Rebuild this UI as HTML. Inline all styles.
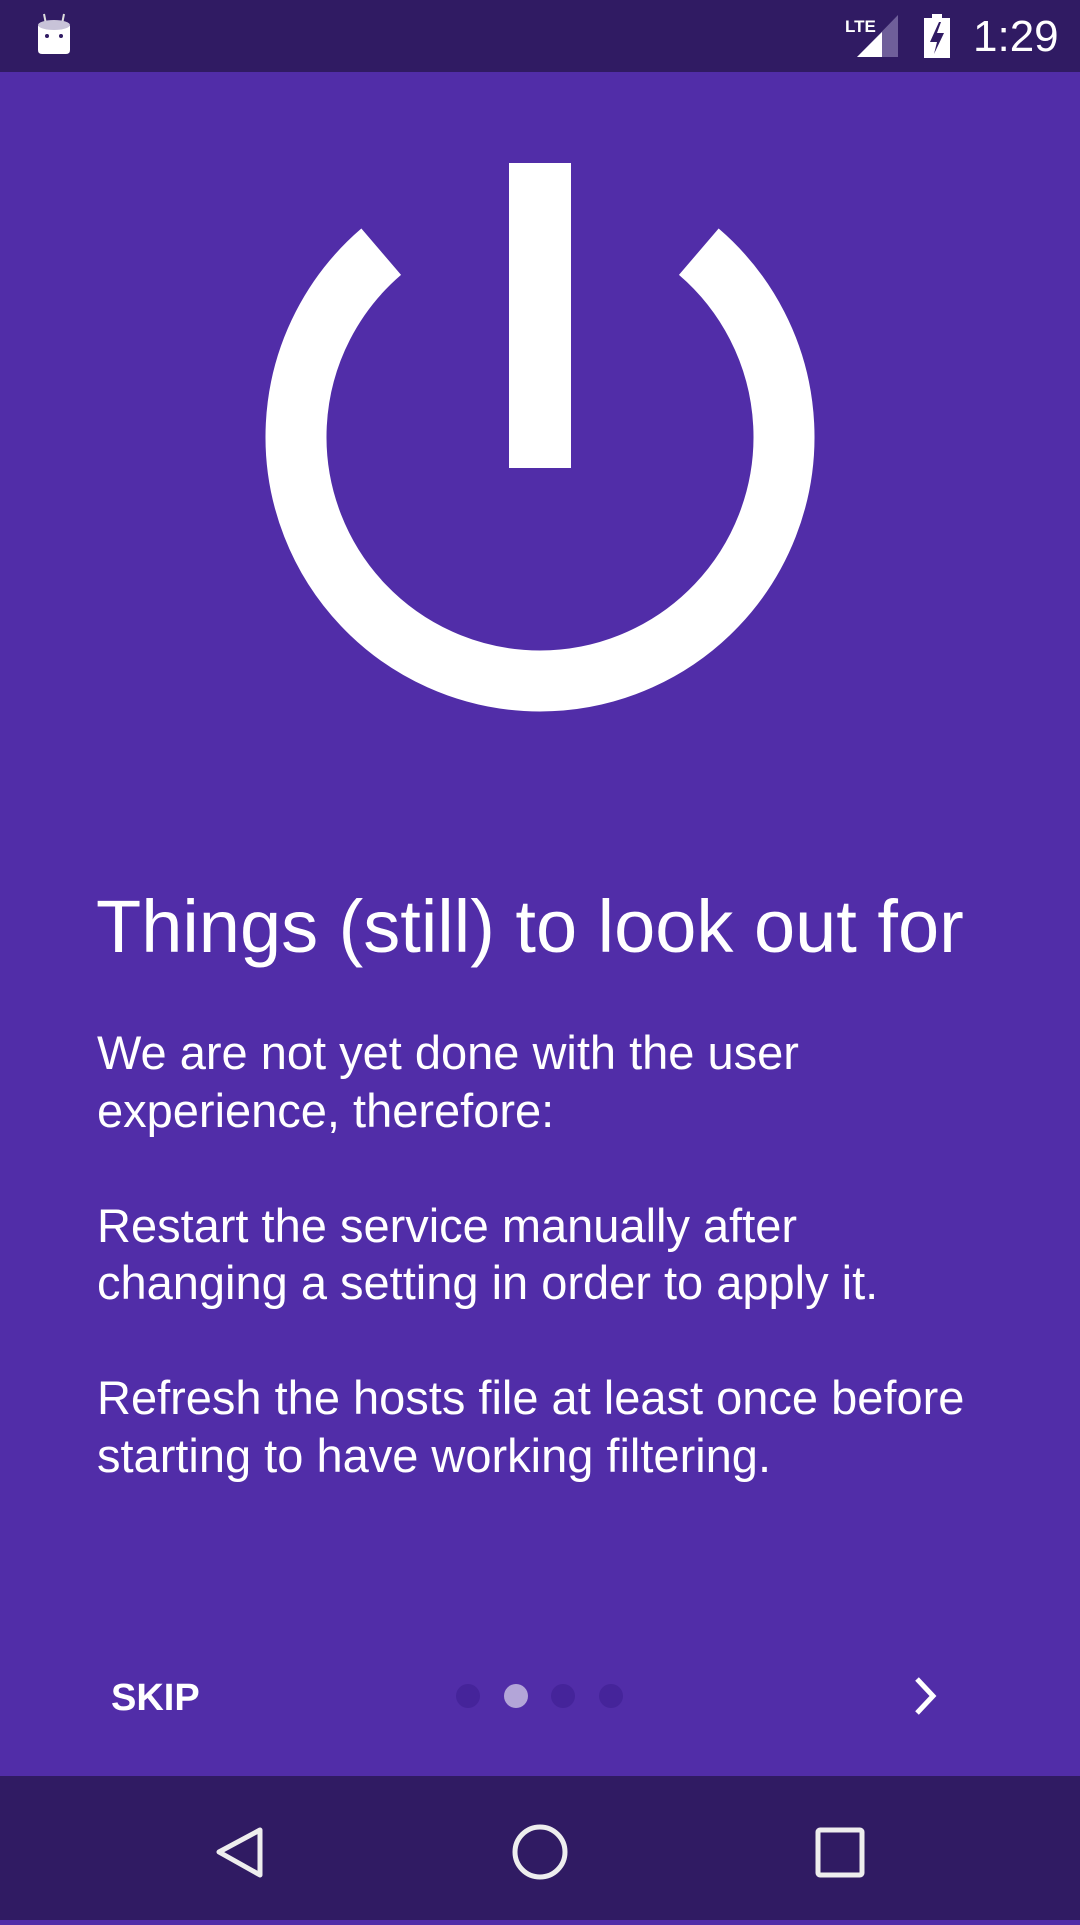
<!DOCTYPE html>
<html><head><meta charset="utf-8"><style>
html,body{margin:0;padding:0;}
body{width:1080px;height:1920px;background:#512da8;position:relative;overflow:hidden;font-family:"Liberation Sans",sans-serif;color:#fff;}
.sb{position:absolute;left:0;top:0;width:1080px;height:72px;background:#301b63;}
.nav{position:absolute;left:0;top:1776px;width:1080px;height:144px;background:#301b63;}
.t{position:absolute;white-space:nowrap;line-height:1;}
</style></head><body>
<div class="sb">
<svg width="1080" height="72" style="position:absolute;left:0;top:0">
  <line x1="44" y1="14" x2="46" y2="24" stroke="#ddd" stroke-width="2"/>
  <line x1="64" y1="14" x2="62" y2="24" stroke="#ddd" stroke-width="2"/>
  <path d="M38 26 Q54 18 70 26 L70 50 Q70 54 66 54 L42 54 Q38 54 38 50 Z" fill="#fff"/>
  <ellipse cx="54" cy="25" rx="16" ry="5" fill="#c8c3d8"/>
  <circle cx="47" cy="36" r="2" fill="#301b63"/><circle cx="61" cy="36" r="2" fill="#301b63"/>
  <text x="845" y="32" font-size="17" font-weight="bold" fill="#fff" font-family="Liberation Sans Narrow, Liberation Sans">LTE</text>
  <polygon points="898,15 898,57 857,57" fill="#6f5f9a"/>
  <polygon points="882,32 882,57 857,57" fill="#fff"/>
  <rect x="932" y="14" width="10" height="5" fill="#fff"/>
  <rect x="924" y="18" width="26" height="40" fill="#fff"/>
  <polygon points="939,22 930,42 937,42 934,54 944,33 937,33 941,22" fill="#301b63"/>
  <text x="973" y="51" font-size="44" fill="#fff">1:29</text>
</svg>
</div>

<svg width="1080" height="720" style="position:absolute;left:0;top:72px">
  <path d="M381.2 179.7 A244 244 0 1 0 698.8 179.7" fill="none" stroke="#fff" stroke-width="61"/>
  <rect x="509" y="91" width="62" height="305" fill="#fff"/>
</svg>

<div class="t" style="left:96px;top:890px;font-size:74px;">Things (still) to look out for</div>
<div class="t" style="left:97px;top:1024px;font-size:47px;line-height:57.5px;">We are not yet done with the user<br>experience, therefore:<br><br>Restart the service manually after<br>changing a setting in order to apply it.<br><br>Refresh the hosts file at least once before<br>starting to have working filtering.</div>

<div class="t" style="left:111px;top:1679px;font-size:38px;font-weight:bold;">SKIP</div>
<svg width="1080" height="80" style="position:absolute;left:0;top:1656px">
  <circle cx="468" cy="40" r="12" fill="#45249a"/>
  <circle cx="516" cy="40" r="12" fill="#b3a5d8"/>
  <circle cx="563" cy="40" r="12" fill="#45249a"/>
  <circle cx="611" cy="40" r="12" fill="#45249a"/>
  <polyline points="917,23 933,40 917,57" fill="none" stroke="#fff" stroke-width="5"/>
</svg>

<div class="nav">
<svg width="1080" height="144">
  <path d="M260 54 L219 76 L260 99 Z" fill="none" stroke="#eee" stroke-width="5" stroke-linejoin="round"/>
  <circle cx="540" cy="76" r="25" fill="none" stroke="#eee" stroke-width="5"/>
  <rect x="818" y="54" width="44" height="45" rx="2" fill="none" stroke="#eee" stroke-width="5"/>
</svg>
</div>
</body></html>
